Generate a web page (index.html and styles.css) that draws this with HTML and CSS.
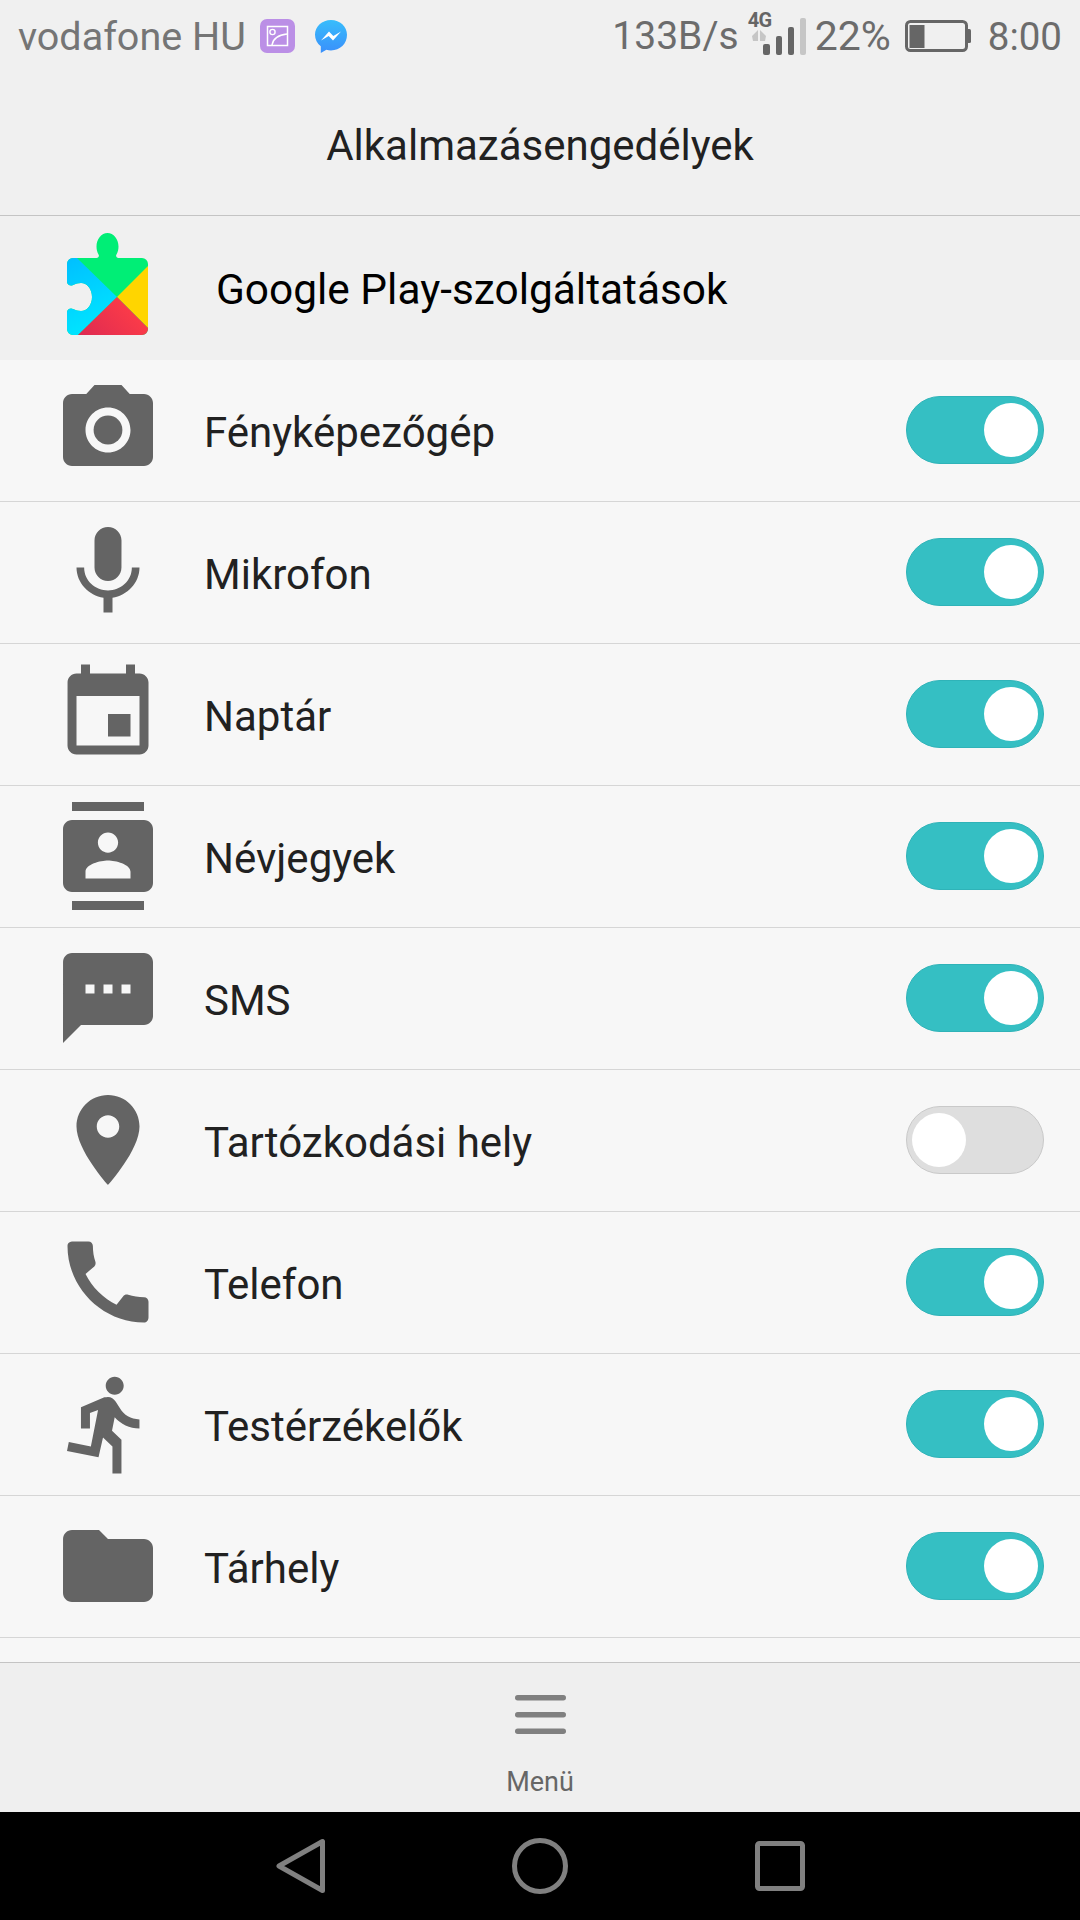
FILE: index.html
```html
<!DOCTYPE html>
<html lang="hu">
<head>
  <meta charset="UTF-8" />
  <meta name="viewport" content="width=device-width, initial-scale=1.0" />
  <title>Alkalmazásengedélyek</title>
  <link rel="stylesheet" href="styles.css">
</head>
<body>
  <div class="screen">
    <div class="statusbar">
      <div class="status-left">
        <span class="carrier">vodafone HU</span>
        <svg class="ic-gallery" width="35" height="34" viewBox="0 0 35 34">
          <rect width="35" height="34" rx="7" fill="#bb8fe6"/>
          <rect x="7.500" y="7.500" width="20" height="19" fill="none" stroke="#fff" stroke-width="1.500"/>
          <circle cx="12.500" cy="13" r="2.600" fill="none" stroke="#fff" stroke-width="1.400"/>
          <path d="M12 26c1-6 6-10 15-11" fill="none" stroke="#fff" stroke-width="1.500"/>
        </svg>
        <svg class="ic-messenger" width="32" height="33" viewBox="0 0 32 33">
          <defs>
            <linearGradient id="msgGrad" x1="0" y1="0" x2="0" y2="1">
              <stop offset="0" stop-color="#38bdfb"/>
              <stop offset="1" stop-color="#3a8ffb"/>
            </linearGradient>
          </defs>
          <path d="M16 0C7 0 0 6.600 0 14.800c0 4.600 2.200 8.700 5.800 11.400V33l5.600-3.200c1.500.4 3 .6 4.600.6 9 0 16-6.600 16-15.600C32 6.600 25 0 16 0z" fill="url(#msgGrad)"/>
          <path d="M6 20.500l8-9 4.300 4.500 7.700-4.500-8 9-4.300-4.500z" fill="#fff"/>
        </svg>
      </div>
      <div class="status-right">
        <span class="speed">133B/s</span>
        <div class="signal">
          <span class="net">4G</span>
          <svg width="58" height="55" viewBox="0 0 58 55">
            <path d="M4 36l6-6v11H5zM12 30l6 6-1 5h-5z" fill="#c6c6c6"/>
            <rect x="15" y="44" width="7" height="11" rx="2" fill="#666"/>
            <rect x="28" y="36" width="6" height="19" rx="2" fill="#666"/>
            <rect x="40" y="27" width="6" height="28" rx="2" fill="#666"/>
            <rect x="52" y="18" width="6" height="37" rx="2" fill="#c6c6c6"/>
          </svg>
        </div>
        <span class="percent">22%</span>
        <svg class="ic-battery" width="66" height="32" viewBox="0 0 66 32">
          <rect x="1.500" y="1.500" width="60" height="29" rx="4" fill="none" stroke="#666" stroke-width="3"/>
          <rect x="4.500" y="5" width="15" height="23" fill="#666"/>
          <path d="M63 9h1.500a1.500 1.500 0 0 1 1.500 1.500v11a1.500 1.500 0 0 1-1.500 1.500H63z" fill="#666"/>
        </svg>
        <span class="clock">8:00</span>
      </div>
    </div>

    <div class="titlebar">Alkalmazásengedélyek</div>

    <div class="app-head">
      <svg class="app-logo" width="81" height="102" viewBox="0 0 81 102">
        <defs>
          <clipPath id="puzzle">
            <path d="M6 25h23.500c2 0 3-2 2-3.500C30 19 29.500 16 29.500 13.500 29.500 6 34.500 0 40.500 0s11 6 11 13.500c0 2.500-.5 5.500-2 8-1 1.500 0 3.500 2 3.500H75a6 6 0 0 1 6 6v65a6 6 0 0 1-6 6H6a6 6 0 0 1-6-6V79c0-2.500 3.500-4.500 6-3 2.500 1.200 5 2 8 2 6 0 11-6 11-14s-5-14-11-14c-3 0-5.500.8-8 2-2.500 1.500-6-.5-6-3V31a6 6 0 0 1 6-6z"/>
          </clipPath>
          <linearGradient id="blueGrad" x1="0" y1="0" x2="0.300" y2="1">
            <stop offset="0" stop-color="#00bfff"/>
            <stop offset="1" stop-color="#00e5ff"/>
          </linearGradient>
          <linearGradient id="redGrad" x1="0" y1="1" x2="1" y2="0.500">
            <stop offset="0" stop-color="#dd2a52"/>
            <stop offset="1" stop-color="#ff3d47"/>
          </linearGradient>
        </defs>
        <g clip-path="url(#puzzle)">
          <rect width="81" height="102" fill="#00ee76"/>
          <path d="M50 64L10 25H0v77h11z" fill="url(#blueGrad)"/>
          <path d="M50 64L81 33v62z" fill="#ffd500"/>
          <path d="M50 64l31 31v7H11z" fill="url(#redGrad)"/>
        </g>
      </svg>
      <span class="app-name">Google Play-szolgáltatások</span>
    </div>

    <div class="perm-list">
      <div class="perm-row">
        <svg class="perm-icon" viewBox="0 0 24 24"><circle cx="12" cy="12" r="3.200"/><path d="M9 2L7.170 4H4c-1.100 0-2 .9-2 2v12c0 1.100.9 2 2 2h16c1.100 0 2-.9 2-2V6c0-1.100-.9-2-2-2h-3.170L15 2H9zm3 15c-2.760 0-5-2.240-5-5s2.240-5 5-5 5 2.240 5 5-2.240 5-5 5z"/></svg>
        <span class="perm-label">Fényképezőgép</span>
        <span class="switch on"><span class="knob"></span></span>
      </div>
      <div class="perm-row">
        <svg class="perm-icon" viewBox="0 0 24 24"><path d="M12 14c1.660 0 2.990-1.340 2.990-3L15 5c0-1.660-1.340-3-3-3S9 3.340 9 5v6c0 1.660 1.340 3 3 3zm5.300-3c0 3-2.540 5.100-5.300 5.100S6.700 14 6.700 11H5c0 3.410 2.720 6.230 6 6.720V21h2v-3.280c3.280-.48 6-3.300 6-6.720h-1.700z"/></svg>
        <span class="perm-label">Mikrofon</span>
        <span class="switch on"><span class="knob"></span></span>
      </div>
      <div class="perm-row">
        <svg class="perm-icon" viewBox="0 0 24 24"><path d="M17 12h-5v5h5v-5zM16 1v2H8V1H6v2H5c-1.110 0-1.990.9-1.990 2L3 19c0 1.100.89 2 2 2h14c1.100 0 2-.9 2-2V5c0-1.100-.9-2-2-2h-1V1h-2zm3 18H5V8h14v11z"/></svg>
        <span class="perm-label">Naptár</span>
        <span class="switch on"><span class="knob"></span></span>
      </div>
      <div class="perm-row">
        <svg class="perm-icon" viewBox="0 0 24 24"><path d="M20 0H4v2h16V0zM4 24h16v-2H4v2zM20 4H4c-1.100 0-2 .9-2 2v12c0 1.100.9 2 2 2h16c1.100 0 2-.9 2-2V6c0-1.100-.9-2-2-2zm-8 2.750c1.240 0 2.250 1.010 2.250 2.250s-1.010 2.250-2.250 2.250S9.750 10.240 9.750 9 10.760 6.750 12 6.750zM17 17H7v-1.500c0-1.670 3.330-2.500 5-2.500s5 .83 5 2.500V17z"/></svg>
        <span class="perm-label">Névjegyek</span>
        <span class="switch on"><span class="knob"></span></span>
      </div>
      <div class="perm-row">
        <svg class="perm-icon" viewBox="0 0 24 24"><path d="M20 2H4c-1.100 0-1.990.9-1.990 2L2 22l4-4h14c1.100 0 2-.9 2-2V4c0-1.100-.9-2-2-2zM9 11H7V9h2v2zm4 0h-2V9h2v2zm4 0h-2V9h2v2z"/></svg>
        <span class="perm-label">SMS</span>
        <span class="switch on"><span class="knob"></span></span>
      </div>
      <div class="perm-row">
        <svg class="perm-icon" viewBox="0 0 24 24"><path d="M12 2C8.130 2 5 5.130 5 9c0 5.250 7 13 7 13s7-7.750 7-13c0-3.870-3.130-7-7-7zm0 9.500c-1.380 0-2.500-1.120-2.500-2.500s1.120-2.500 2.500-2.500 2.500 1.120 2.500 2.500-1.120 2.500-2.500 2.500z"/></svg>
        <span class="perm-label">Tartózkodási hely</span>
        <span class="switch off"><span class="knob"></span></span>
      </div>
      <div class="perm-row">
        <svg class="perm-icon" viewBox="0 0 24 24"><path d="M20.010 15.380c-1.230 0-2.420-.2-3.530-.56-.35-.12-.74-.03-1.010.24l-1.570 1.970c-2.830-1.350-5.480-3.900-6.890-6.830l1.950-1.660c.27-.28.35-.67.24-1.020-.37-1.110-.56-2.300-.56-3.530 0-.54-.45-.99-.99-.99H4.190C3.650 3 3 3.240 3 3.990 3 13.280 10.730 21 20.010 21c.71 0 .99-.63.99-1.180v-3.450c0-.54-.45-.99-.99-.99z"/></svg>
        <span class="perm-label">Telefon</span>
        <span class="switch on"><span class="knob"></span></span>
      </div>
      <div class="perm-row">
        <svg class="perm-icon" viewBox="0 0 24 24"><path d="M13.490 5.480c1.100 0 2-.9 2-2s-.9-2-2-2-2 .9-2 2 .9 2 2 2zm-3.600 13.900l1-4.400 2.100 2v6h2v-7.500l-2.100-2 .6-3c1.300 1.500 3.300 2.500 5.500 2.500v-2c-1.900 0-3.500-1-4.300-2.400l-1-1.600c-.4-.6-1-1-1.700-1-.3 0-.5.1-.8.1l-5.200 2.200v4.700h2v-3.400l1.800-.7-1.600 8.100-4.900-1-.4 2 7 1.400z"/></svg>
        <span class="perm-label">Testérzékelők</span>
        <span class="switch on"><span class="knob"></span></span>
      </div>
      <div class="perm-row">
        <svg class="perm-icon" viewBox="0 0 24 24"><path d="M10 4H4c-1.100 0-1.990.9-1.990 2L2 18c0 1.100.9 2 2 2h16c1.100 0 2-.9 2-2V8c0-1.100-.9-2-2-2h-8l-2-2z"/></svg>
        <span class="perm-label">Tárhely</span>
        <span class="switch on"><span class="knob"></span></span>
      </div>
    </div>

    <div class="menubar">
      <svg class="menu-icon" width="51" height="39" viewBox="0 0 51 39">
        <rect width="51" height="5.500" rx="2.700"/>
        <rect y="17" width="51" height="5.500" rx="2.700"/>
        <rect y="33.500" width="51" height="5.500" rx="2.700"/>
      </svg>
      <span class="menu-label">Menü</span>
    </div>

    <div class="navbar">
      <svg width="50" height="56" viewBox="0 0 50 56"><path d="M46.500 3.500v49L3 28z" fill="none" stroke="#808080" stroke-width="5" stroke-linejoin="round"/></svg>
      <svg width="56" height="56" viewBox="0 0 56 56"><circle cx="28" cy="28" r="25.500" fill="none" stroke="#808080" stroke-width="5"/></svg>
      <svg width="50" height="50" viewBox="0 0 50 50"><rect x="2.500" y="2.500" width="45" height="45" rx="2" fill="none" stroke="#808080" stroke-width="5"/></svg>
    </div>
  </div>
</body>
</html>
```

FILE: styles.css
```css
* { box-sizing: border-box; }
html, body { margin: 0; padding: 0; }
body { font-family: Roboto, "Liberation Sans", sans-serif; background: #f7f7f7; color: #212121; }

.screen { width: 1080px; height: 1920px; display: flex; flex-direction: column; overflow: hidden; }

.statusbar { height: 72px; flex: none; background: #f0f0f0; display: flex; justify-content: space-between; align-items: center; padding: 0 18px 0 18px; color: #6c6c6c; font-size: 39px; }
.status-left, .status-right { display: flex; align-items: center; }
.carrier { color: #757575; font-size: 39.5px; }
.ic-gallery { margin-left: 14px; }
.ic-messenger { margin-left: 20px; }
.signal { width: 58px; height: 72px; margin-left: 9px; position: relative; }
.signal svg { display: block; position: absolute; left: 0; top: 0; }
.net { position: absolute; left: 0; top: 9px; font-size: 20px; font-weight: 700; line-height: 22px; color: #666; letter-spacing: -0.5px; }
.percent { margin-left: 9px; font-size: 41px; }
.ic-battery { margin-left: 14px; }
.clock { margin-left: 17px; font-size: 38.5px; }

.titlebar { height: 144px; flex: none; background: #f0f0f0; border-bottom: 1px solid #c4c4c4; display: flex; align-items: center; justify-content: center; padding-top: 3px; font-size: 42px; color: #212121; }

.app-head { height: 144px; flex: none; background: #f0f0f0; display: flex; align-items: center; padding-left: 67px; }
.app-logo { display: block; margin-bottom: 8px; }
.app-name { margin-left: 68px; padding-top: 3px; font-size: 42.4px; color: #000; }

.perm-list { flex: none; background: #f7f7f7; }
.perm-row { height: 142px; display: flex; align-items: center; padding: 0 36px 1px 54px; border-bottom: 1px solid #d6d6d6; }
.perm-icon { width: 108px; height: 108px; flex: none; fill: #646464; }
.perm-label { flex: 1; margin-left: 42px; padding-top: 4px; font-size: 42px; color: #212121; }

.switch { width: 138px; height: 68px; flex: none; border-radius: 34px; display: flex; align-items: center; padding: 0 5px; border: 1px solid; }
.switch.on { background: #35bfc3; border-color: #2fb3b8; justify-content: flex-end; }
.switch.off { background: #dedede; border-color: #c9c9c9; justify-content: flex-start; }
.knob { width: 54px; height: 54px; border-radius: 50%; background: #fff; }

.menubar { margin-top: 24px; height: 150px; flex: none; background: #efefef; border-top: 1px solid #c4c4c4; display: flex; flex-direction: column; align-items: center; padding-top: 32px; }
.menu-icon { display: block; fill: #808080; }
.menu-label { margin-top: 31px; font-size: 27px; line-height: 34px; color: #666; }

.navbar { flex: 1; background: #000; display: flex; align-items: center; padding-left: 276px; }
.navbar svg { display: block; flex: none; }
.navbar svg:nth-child(2) { margin-left: 186px; }
.navbar svg:nth-child(3) { margin-left: 187px; }
```
